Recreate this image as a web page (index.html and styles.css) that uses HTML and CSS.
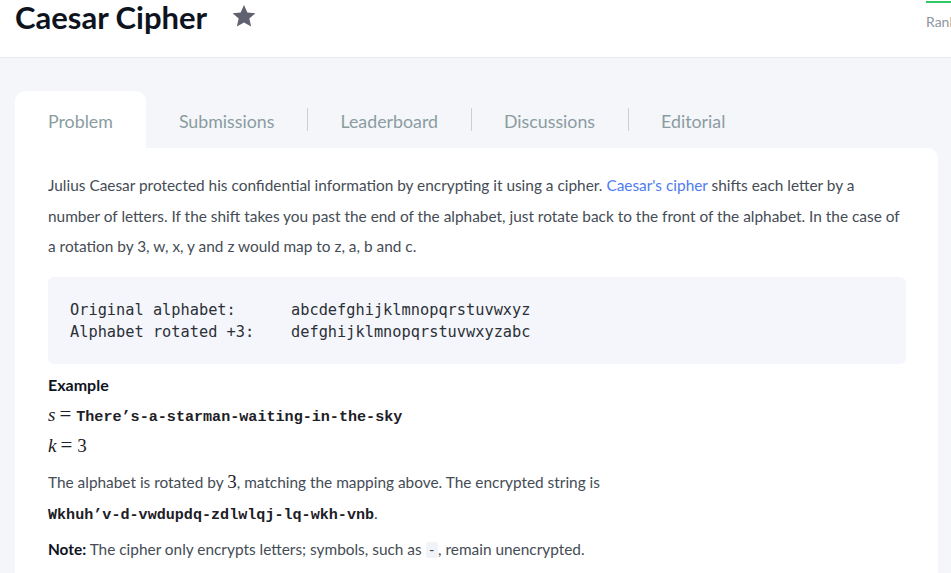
FILE: index.html
```html
<!DOCTYPE html>
<html lang="en">
<head>
<meta charset="utf-8">
<title>Caesar Cipher</title>
<link rel="stylesheet" href="styles.css">
</head>
<body>
<header class="topbar">
  <div class="title-group">
    <h1 class="title">Caesar Cipher</h1>
    <svg class="star" viewBox="0 0 24 24" width="26" height="26" aria-hidden="true"><path d="M12 1.8l3.1 6.9 7.4.7-5.6 5 1.7 7.4L12 17.9l-6.6 3.9 1.7-7.4-5.6-5 7.4-.7z" fill="#5f6170"/></svg>
  </div>
  <div class="rank">
    <span class="rank-bar"></span>
    <span class="rank-label">Rank</span>
  </div>
</header>

<main class="main">
  <nav class="tabs">
    <a class="tab active">Problem</a>
    <a class="tab">Submissions</a>
    <a class="tab sep">Leaderboard</a>
    <a class="tab sep">Discussions</a>
    <a class="tab sep">Editorial</a>
  </nav>

  <section class="card">
    <p class="para">Julius Caesar protected his confidential information by encrypting it using a cipher. <a class="link">Caesar's cipher</a> shifts each letter by a<br>number of letters. If the shift takes you past the end of the alphabet, just rotate back to the front of the alphabet. In the case of<br>a rotation by 3, w, x, y and z would map to z, a, b and c.</p>

    <pre class="code">Original alphabet:      abcdefghijklmnopqrstuvwxyz
Alphabet rotated +3:    defghijklmnopqrstuvwxyzabc</pre>

    <h2 class="heading">Example</h2>
    <p class="para tight"><span class="mi">s</span><span class="mo">=</span><span class="tt">There’s-a-starman-waiting-in-the-sky</span></p>
    <p class="para tight"><span class="mi">k</span><span class="mo">=</span><span class="mn">3</span></p>

    <p class="para">The alphabet is rotated by <span class="mn">3</span>, matching the mapping above. The encrypted string is<br><span class="tt">Wkhuh’v-d-vwdupdq-zdlwlqj-lq-wkh-vnb</span>.</p>

    <p class="para"><strong class="strong">Note:</strong> The cipher only encrypts letters; symbols, such as <code class="inline">-</code>, remain unencrypted.</p>
  </section>
</main>
</body>
</html>
```

FILE: styles.css
```css
* { box-sizing: border-box; }

html, body {
  margin: 0;
  padding: 0;
}

body {
  background: #f4f6fa;
  font-family: "Lato", "Liberation Sans", sans-serif;
  color: #39424e;
  overflow: hidden;
  height: 573px;
}

.topbar {
  height: 58px;
  background: #ffffff;
  border-bottom: 1px solid #e7eaf0;
  display: flex;
  justify-content: space-between;
  align-items: flex-start;
}

.title-group {
  display: flex;
  align-items: center;
  gap: 24px;
  padding-left: 15px;
  margin-top: -6px;
  height: 46px;
}

.title {
  margin: 0;
  font-size: 31px;
  font-weight: 700;
  color: #0e141e;
  line-height: 46px;
}

.star { display: block; margin-top: -2px; }

.rank {
  display: flex;
  flex-direction: column;
  align-items: flex-start;
  width: 25px;
  overflow: hidden;
  white-space: nowrap;
}

.rank-bar {
  display: block;
  width: 25px;
  height: 2px;
  background: #2ec866;
  margin-top: 1px;
}

.rank-label {
  margin-top: 11px;
  font-size: 14px;
  color: #8c959e;
  line-height: 16px;
}

.main {
  padding: 33px 13px 0 15px;
}

.tabs {
  display: flex;
  height: 57px;
  align-items: stretch;
}

.tab {
  display: flex;
  align-items: center;
  padding: 2px 33px 0;
  font-size: 17.8px;
  color: #8b9ca1;
  position: relative;
}

.tab.active {
  background: #ffffff;
  border-radius: 10px 10px 0 0;
}

.tab.sep::before {
  content: "";
  position: absolute;
  left: 0;
  top: 17px;
  height: 23px;
  border-left: 1px solid #c9d1d4;
}

.card {
  background: #ffffff;
  border-radius: 0 10px 0 0;
  padding: 22px 32px 40px 33px;
  min-height: 500px;
}

.para {
  margin: 0 0 6px;
  font-size: 15.4px;
  line-height: 30.5px;
  color: #454c55;
}

.para.tight { margin-bottom: 0; }
.para.tight + .para:not(.tight) { margin-top: 6px; }

.link { color: #4f7cf0; text-decoration: none; }

.code {
  margin: 15px 0 6px;
  background: #f5f6fb;
  border-radius: 6px;
  padding: 22px 22px 21px;
  font-family: "DejaVu Sans Mono", monospace;
  font-size: 15.3px;
  line-height: 22px;
  color: #2b3038;
}

.heading {
  margin: 0;
  font-size: 16px;
  font-weight: 700;
  line-height: 30.5px;
  color: #0e141e;
}

.mi, .mo, .mn, .tt { line-height: 1; }

.mi {
  font-family: "Liberation Serif", serif;
  font-style: italic;
  font-size: 19px;
  color: #1d2026;
}

.mo {
  font-family: "Liberation Serif", serif;
  font-size: 21px;
  margin: 0 5px 0 4px;
  color: #1d2026;
}

.mn {
  font-family: "Liberation Serif", serif;
  font-size: 19px;
  color: #1d2026;
}

.tt {
  font-family: "Liberation Mono", monospace;
  font-weight: 700;
  font-size: 15.1px;
  color: #1d2026;
}

.strong { font-weight: 700; color: #0e141e; }

.inline {
  font-family: "DejaVu Sans Mono", monospace;
  font-size: 14px;
  line-height: 1;
  background: #f1f3f8;
  padding: 0 2px;
  border-radius: 2px;
}
```
